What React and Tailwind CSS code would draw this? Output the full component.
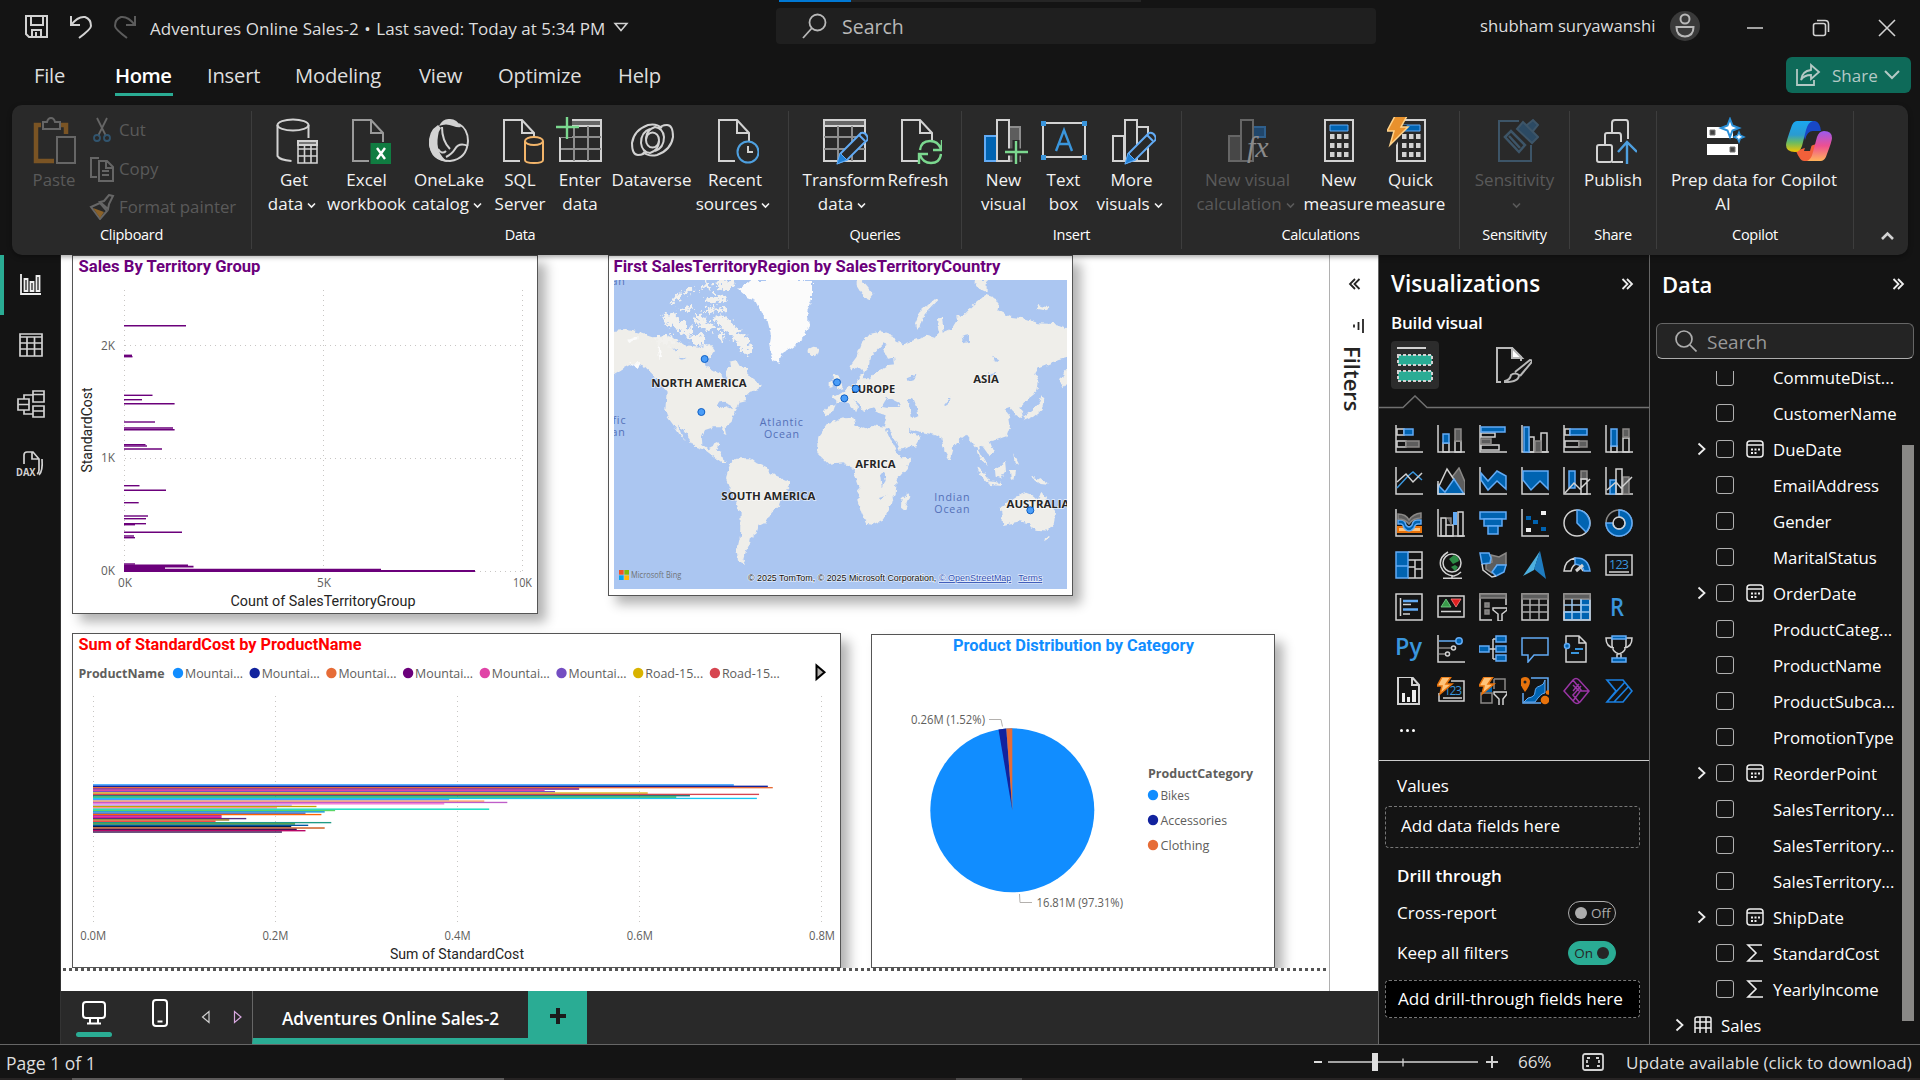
import React from "react";

const W = "#d2d2d2";
const G = "#8a8886";
const B = "#0063b1";
const LB = "#62abf5";

const S = ({ children, className = "w-12 h-12", vb = "0 0 48 48", c = W, w = 2 }) => (
  <svg className={className} viewBox={vb} fill="none" stroke={c} strokeWidth={w}>{children}</svg>
);

/* ---------- ribbon icons ---------- */
const Doc = ({ x = 7, c = W }) => (
  <g stroke={c}>
    <path d={`M${x + 17} 44H${x + 1}V3h18l12 13v9`} />
    <path d={`M${x + 19} 3v13h12`} />
  </g>
);
const Calc = ({ x = 9 }) => (
  <g>
    <path d={`M${x} 3h28v41h-28z`} />
    <path d={`M${x + 5} 8h18v6h-18z`} fill={B} stroke={LB} strokeWidth="1" />
    {[17, 26, 35].map((y) => [5, 12, 19].map((dx) => <path key={`${y}-${dx}`} d={`M${x + dx} ${y}h4.5v5h-4.5z`} fill={W} stroke="none" />))}
  </g>
);
const Pencil = ({ x = 17 }) => (
  <g>
    <path d={`M${x + 1} 46l3-10L${x + 24} 16q4-1 6 3t-2 6L${x + 10} 43z`} fill="#292929" stroke={LB} />
    <path d={`M${x} 47l3-11 7 7z`} fill="#1f7fd4" stroke={LB} strokeWidth="1" />
    <path d={`M${x + 22} 18l6 6`} stroke={LB} />
  </g>
);
const IGet = () => (
  <S>
    <ellipse cx="23" cy="8" rx="15.500" ry="5.500" /><path d="M7.500 8v31q2 4 14 5M38.500 8v13" />
    <path d="M28 24h19v22H28z M28 32h19M28 39h19M34.500 28v18M41 28v18" strokeWidth="1.600" /><path d="M28 24h19v4H28z" fill="#777" />
  </S>
);
const IExcel = () => (
  <S><Doc x={9} c="#9a9a9a" /><path d="M27.500 26h21v21h-21z" fill="#107c41" stroke="none" /><path d="M34 31l8 11M42 31l-8 11" stroke="#fff" strokeWidth="2.400" /></S>
);
const ILake = () => (
  <S>
    <path d="M34 7q9 5 9 17-1 18-18 20Q6 44 5 26" />
    <path d="M14 9Q18 1 25 2q7 0 11 8-3 1-8-1-7-3-14 0z" fill={W} stroke="none" />
    <path d="M13 8Q3 14 4 28q3 15 19 17Q10 36 13 19q0-4 3-8z" fill={W} stroke="none" />
    <path d="M17 10q0 14 8 22M21 40q6-3 9-8 4-7 13-3M13 32q4 6 8 2" />
  </S>
);
const ISql = () => (
  <S><Doc x={7} /><path d="M29 24v19q0 3 9 3t9-3V24" stroke="#f3b56a" fill="#292929" /><ellipse cx="38" cy="24" rx="9" ry="4" stroke="#f3b56a" fill="#292929" /></S>
);
const GridI = () => (
  <g><path d="M4 3h41v41H4z" /><path d="M4 3h41v6H4z" fill="#666" /><path d="M4 20h41M4 32h41M18 9v35M32 9v35" stroke="#8d8d8d" /></g>
);
const IEnter = () => (
  <S><GridI /><path d="M0 0h16v20H0z" fill="#292929" stroke="none" /><path d="M11-1v23M0 10h23" stroke="#7bd88f" strokeWidth="2.400" /><path d="M4 23v21" /></S>
);
const IDataverse = () => (
  <S w={2}>
    <path d="M34 11Q28 6 20 8 6 13 4 26q0 12 6 12 6 0 8-4" />
    <path d="M15 35q6 5 14 3 14-5 16-18 0-12-6-12-6 0-8 4" />
    <ellipse cx="24.500" cy="23" rx="6.500" ry="7.500" />
    <path d="M31 24q0 9-9 12-8-1-9-10 0-11 9-14" /><path d="M18 22q0-9 9-12 8 1 9 10 0 11-9 14" />
  </S>
);
const IRecent = () => (
  <S><Doc /><circle cx="37" cy="35" r="10.500" stroke="#4ea0e0" fill="#292929" /><path d="M37 29v6h5" /></S>
);
const ITransform = () => (<S><GridI /><Pencil x={17} /></S>);
const IRefresh = () => (
  <S><Doc /><path d="M26 33q1-9 10-9 8 0 11 8M48 23v10h-9M47 37q-1 9-10 9-8 0-11-8M25 47V37h9" stroke="#7bd88f" strokeWidth="2.400" /></S>
);
const INewVisual = () => (
  <S>
    <path d="M29 10h11v34H29z" fill="#5d5d5d" stroke="#8d8d8d" /><path d="M5 19h12v25H5z" fill={B} stroke={LB} /><path d="M17 3h12v41H17z" fill="#292929" />
    <path d="M36 23v24M25 35h23" stroke="#292929" strokeWidth="7" /><path d="M36 24v23M25 35h23" stroke="#7bd88f" strokeWidth="2.400" />
  </S>
);
const ITextBox = () => (
  <S>
    <path d="M3 6h42v34H3z" /><path d="M16 34l8-21 8 21M19 27h10" stroke="#3a96dd" strokeWidth="2.400" />
    {[[1, 4], [42, 4], [1, 38], [42, 38]].map(([x, y]) => <path key={x + "-" + y} d={`M${x} ${y}h5v5h-5z`} fill="#3a96dd" stroke="none" />)}
  </S>
);
const IMore = () => (<S><path d="M5 19h11v25H5zM17 3h12v41H17zM29 10h11v34H29z" /><Pencil x={17} /></S>);
const ICalcV = () => (
  <S c="#666">
    <path d="M5 19h12v25H5z" fill="#474747" /><path d="M29 10h12v10H29z" fill="#20466b" stroke="#2f5f8c" /><path d="M17 3h12v41H17z" fill="#292929" />
    <text x="23" y="40" fill="#8a8a8a" stroke="none" fontFamily="Liberation Serif, serif" fontStyle="italic" fontSize="30">fx</text>
  </S>
);
const Bolt = ({ t = "", s = "#ffd38a" }) => <path transform={t} d="M8 0h12l-6 11h7L3 29l4-14H0z" fill="#e8912d" stroke={s} strokeWidth="1.500" />;
const INewMeasure = () => <S><Calc x={10} /></S>;
const IQuick = () => (<S><Calc x={10} /><path d="M0 0h18l-4 8h6L8 30H0z" fill="#292929" stroke="none" /><Bolt t="translate(0,-1)" /></S>);
const ISens = () => (
  <S c="#3d5568"><path d="M28 4H8v40h32V28" /><path d="M14 20l6-6 14 14-6 7zM18 19l11 12" strokeWidth="2.500" /><path d="M26 12l6-7 15 15-6 6zM36 8l6-5 5 5-5 6" fill="#2c4a63" /></S>
);
const IPublish = () => (
  <S><rect x="8" y="28" width="15" height="17" rx="2" /><path d="M16 28V18q0-2 2-2h12q2 0 2 3v6M23 16V6q0-3 3-3h11q2 0 2 3v16M23 45h11" /><path d="M38 47V26M29 35l9-10 10 10" stroke="#4ea0e0" strokeWidth="2.400" /></S>
);
const IPrep = () => (
  <S><path d="M8 10h26v11H8zM8 27h31v11H8z" fill="#fff" stroke="none" /><path d="M11 13h5v5h-5zM31 30h5v5h-5z" fill="#444" stroke="#777" strokeWidth="1" />
    <path d="M31 2l2.500 6.500L40 11l-6.500 2.500L31 20l-2.500-6.500L22 11l6.500-2.500z" fill="#fff" stroke="#2a8fd8" strokeWidth="2" /><path d="M40 15l1.300 3.200L45 20l-3.700 1.500L40 25l-1.500-3.500L35 20l3.500-1.500z" fill="#fff" stroke="#2a8fd8" strokeWidth="1.500" /></S>
);
const ICopilot = () => (
  <S>
    <defs>
      <linearGradient id="cpa" x1="0" y1="0" x2="0" y2="1"><stop offset="0" stopColor="#1aa7f0" /><stop offset=".45" stopColor="#2b9bd0" /><stop offset=".7" stopColor="#6cbb60" /><stop offset="1" stopColor="#f4c400" /></linearGradient>
      <linearGradient id="cpb" x1="0" y1="0" x2="0" y2="1"><stop offset="0" stopColor="#9b59f0" /><stop offset=".5" stopColor="#ee5090" /><stop offset="1" stopColor="#ffb35a" /></linearGradient>
    </defs>
    <path d="M15 4h15q5 1 6 10h-8q-6 0-8 9z" fill="#1848c8" stroke="none" /><path d="M11 34q4 10 8 10h11l4-18z" fill="#f2603a" stroke="none" />
    <path d="M12 4h16q-5 1-7 9l-4 16q-2 6-7 6Q1 35 1 28q0-3 5-17 2-7 6-7z" fill="url(#cpa)" stroke="none" />
    <path d="M36 44H22q4-1 6-9l4-15q2-6 7-6 8 0 8 7 0 3-5 16-2 7-6 7z" fill="url(#cpb)" stroke="none" />
    <path d="M23 20h6l-4 14h-6z" fill="#292929" stroke="none" />
  </S>
);

const Caret = () => (
  <svg className="ml-1 inline-block h-[7px] w-[9px]" viewBox="0 0 9 7" fill="none" stroke="currentColor" strokeWidth="1.600"><path d="M1 1.500l3.500 3.500L8 1.500" /></svg>
);

function Item({ icon: Icon, w, l1, l2, caret, dim }) {
  return (
    <div className={`flex shrink-0 flex-col items-center ${w} ${dim ? "text-[#5a5a5a]" : "text-[#f3f3f3]"}`}>
      <Icon />
      <div className="mt-[3px] whitespace-nowrap text-center text-[17px] leading-6">
        <div>{l1}</div>
        <div className={caret && l2 ? "pr-[4px]" : ""}>{l2}{caret && <Caret />}</div>
      </div>
    </div>
  );
}
function Group({ name, w, children, inner = "justify-center" }) {
  return (
    <div className={`flex h-[138px] shrink-0 flex-col border-r border-[#3d3d3d] ${w}`}>
      <div className={`flex h-[113px] pt-[6px] ${inner}`}>{children}</div>
      <div className="text-center text-[14.500px] leading-[22px] tracking-[-0.3px] text-white">{name}</div>
    </div>
  );
}

/* ---------- title bar + menu ---------- */
function TitleBar() {
  return (
    <div className="relative flex h-[52px] items-start text-[#dedede]">
      <div className="absolute left-[779px] top-0 flex h-[2px]"><div className="w-[72px] bg-[#0078d4]" /><div className="w-[290px] bg-[#252525]" /></div>
      <S className="ml-[24px] mt-[14px] h-[25px] w-[25px]" vb="0 0 25 25"><path d="M2 2h21v21H5l-3-3z" /><path d="M7 2v9h12V2M8 23v-7h9v7M12 18v5" /></S>
      <S className="ml-[20px] mt-[14px] h-[25px] w-[25px]" vb="0 0 25 25"><path d="M2 2v9h9M2 11Q9 2 16 3q6 2 6 9 0 3-12 12" /></S>
      <S className="ml-[18px] mt-[14px] h-[25px] w-[25px]" vb="0 0 25 25" c="#5c5c5c"><path d="M23 2v9h-9M23 11Q16 2 9 3 3 5 3 12q0 3 12 12" /></S>
      <div className="ml-[13px] mt-[17px] w-[455px] whitespace-nowrap text-[17px] leading-6 tracking-[0.050px]">Adventures Online Sales-2 <span className="mx-px">•</span> Last saved: Today at 5:34 PM</div>
      <S className="ml-[8px] mt-[22px] h-[10px] w-[16px]" vb="0 0 16 10" w={1.5}><path d="M2 1.500h12L8 8.500z" /></S>
      <div className="ml-[147px] mt-[8px] flex h-[36px] w-[600px] items-center rounded bg-[#1f1f1f] pl-[26px] text-[19.500px] text-[#b8b8b8]">
        <S className="h-[26px] w-[26px]" vb="0 0 26 26" w={1.8} c="#b8b8b8"><circle cx="15.500" cy="9.500" r="8" /><path d="M10 15L1 25" /></S>
        <span className="ml-[14px] pt-[2px]">Search</span>
      </div>
      <div className="ml-[104px] mt-[14px] w-[176px] whitespace-nowrap text-[16.700px] leading-6">shubham suryawanshi</div>
      <S className="ml-[14px] mt-[11px] h-[30px] w-[30px]" vb="0 0 30 30"><circle cx="15" cy="15" r="15" fill="#3a3a3a" stroke="none" /><circle cx="15" cy="8" r="4.500" stroke="#b8b8b8" /><path d="M6.500 16h17q0 9-8.500 9.500Q6.500 25 6.500 16z" stroke="#b8b8b8" /></S>
      <S className="ml-[46px] mt-[19px] h-[18px] w-[18px]" vb="0 0 18 18" w={1.5}><path d="M1 9h16" /></S>
      <S className="ml-[48px] mt-[19px] h-[18px] w-[18px]" vb="0 0 18 18" w={1.6}><rect x="1.500" y="4.500" width="12" height="12" rx="2" /><path d="M5 1.500h8q3.500 0 3.500 3.500v8" /></S>
      <S className="ml-[48px] mt-[19px] h-[18px] w-[18px]" vb="0 0 18 18" w={1.6}><path d="M1 1l16 16M17 1L1 17" /></S>
    </div>
  );
}
const tabs = [["File", "ml-[34px] w-[81px]"], ["Home", "w-[92px]"], ["Insert", "w-[88px]"], ["Modeling", "w-[124px]"], ["View", "w-[79px]"], ["Optimize", "w-[120px]"], ["Help", "w-[60px]"]];
function Menu() {
  return (
    <div className="flex h-[53px] items-start text-[20.200px] text-[#dedede]">
      {tabs.map(([t, c]) => (
        <div key={t} className={`${c} pt-[8px] tracking-[-0.2px]`}>
          {t === "Home" ? <div className="w-[58px] whitespace-nowrap border-b-[3px] border-[#2aac94] pb-[3px] font-semibold leading-[30px] tracking-[-0.500px] text-white">{t}</div> : <div className="leading-[30px]">{t}</div>}
        </div>
      ))}
      <div className="ml-auto mr-[9px] mt-[5px] flex h-[36px] w-[125px] items-center rounded-md bg-[#0e6a59] pl-[9px] text-[17px] text-[#b4c9c5]">
        <S className="h-[24px] w-[26px]" vb="0 0 26 24" c="#b4c9c5" w={1.8}><path d="M2 6v16h17v-5M6 17q1-9 10-10V2l8 7-8 7v-4Q9 12 6 17z" /></S>
        <span className="ml-[11px] pt-px">Share</span>
        <S className="ml-[6px] h-[10px] w-[16px]" vb="0 0 16 10" c="#b4c9c5"><path d="M1 1l7 7 7-7" /></S>
      </div>
    </div>
  );
}
function Ribbon() {
  return (
    <div className="relative z-10 mx-3 flex h-[150px] rounded-[10px] bg-[#292929] pt-[6px] shadow-[0_2px_5px_rgba(0,0,0,0.35)]">
      <Group name="Clipboard" w="w-[240px]">
        <div className="flex w-full pl-[18px] text-[16.800px] text-[#5a5a5a]">
          <div className="flex w-[48px] flex-col items-center">
            <svg className="h-12 w-12" viewBox="-2 0 48 48" fill="none" stroke="#666" strokeWidth="2"><path d="M9 8H4v36h18M28 8h6v9" stroke="#7a5424" strokeWidth="4.500" /><path d="M11 5h4q1-4 4-4t4 4h5v7H11z" /><path d="M25 20h18v26H25z" fill="#292929" /></svg>
            <div className="mt-[3px] leading-6">Paste</div>
          </div>
          <div className="ml-[11px] flex flex-col">
            <div className="flex h-[26px] items-center"><S className="h-[26px] w-[26px]" vb="0 0 26 26" c="#666" w={1.8}><path d="M8 1l9 18M18 1L9 19" /><circle cx="8" cy="21" r="3" stroke="#31556f" /><circle cx="18" cy="21" r="3" stroke="#31556f" /></S><span className="ml-[4px]">Cut</span></div>
            <div className="mt-[13px] flex h-[26px] items-center"><S className="h-[26px] w-[26px]" vb="0 0 26 26" c="#666"><path d="M8 21H2V2h8M10 5h8l6 6v14H10zM13 15h7M13 19h7M17 5v7h7" /></S><span className="ml-[4px]">Copy</span></div>
            <div className="mt-[12px] flex h-[26px] items-center whitespace-nowrap"><S className="h-[26px] w-[26px]" vb="0 0 26 26" c="#666"><path d="M2 13l9-4 7 8-7 8z" /><path d="M4 14l11 4-4 6z" fill="#8a6128" stroke="none" /><path d="M11 8l4-1 5-6 4 1-4 8-1 5z" /></S><span className="ml-[4px]">Format painter</span></div>
          </div>
        </div>
      </Group>
      <Group name="Data" w="w-[537px]">
        <Item icon={IGet} w="w-[72px]" l1="Get" l2="data" caret />
        <Item icon={IExcel} w="w-[73px]" l1="Excel" l2="workbook" />
        <Item icon={ILake} w="w-[92px]" l1="OneLake" l2="catalog" caret />
        <Item icon={ISql} w="w-[50px]" l1="SQL" l2="Server" />
        <Item icon={IEnter} w="w-[70px]" l1="Enter" l2="data" />
        <Item icon={IDataverse} w="w-[73px]" l1="Dataverse" />
        <Item icon={IRecent} w="w-[94px]" l1="Recent" l2="sources" caret />
      </Group>
      <Group name="Queries" w="w-[173px]">
        <Item icon={ITransform} w="w-[86px]" l1="Transform" l2="data" caret />
        <Item icon={IRefresh} w="w-[62px]" l1="Refresh" />
      </Group>
      <Group name="Insert" w="w-[220px]">
        <Item icon={INewVisual} w="w-[58px]" l1="New" l2="visual" />
        <Item icon={ITextBox} w="w-[62px]" l1="Text" l2="box" />
        <Item icon={IMore} w="w-[74px]" l1="More" l2="visuals" caret />
      </Group>
      <Group name="Calculations" w="w-[278px]" inner="justify-center pr-[2px]">
        <Item icon={ICalcV} w="w-[110px]" l1="New visual" l2="calculation" caret dim />
        <Item icon={INewMeasure} w="w-[72px]" l1="New" l2="measure" />
        <Item icon={IQuick} w="w-[72px]" l1="Quick" l2="measure" />
      </Group>
      <Group name="Sensitivity" w="w-[110px]"><Item icon={ISens} w="w-[80px]" l1="Sensitivity" caret dim /></Group>
      <Group name="Share" w="w-[87px]"><Item icon={IPublish} w="w-[60px]" l1="Publish" /></Group>
      <Group name="Copilot" w="w-[197px]" inner="justify-center pr-[14px]">
        <Item icon={IPrep} w="w-[122px]" l1="Prep data for" l2="AI" />
        <Item icon={ICopilot} w="w-[50px]" l1="Copilot" />
      </Group>
      <S className="mb-[14px] ml-auto mr-[13px] h-[10px] w-[15px] self-end" vb="0 0 15 10" w={2.6}><path d="M2 8l5.500-5.500L13 8" /></S>
    </div>
  );
}

/* ---------- report visuals ---------- */
const DIN = "Roboto, sans-serif";
const SEG = "Open Sans, sans-serif";
function T({ x, y, s = 12.5, a = "start", f = SEG, c = "#605e5c", l, b, children, ...p }) {
  return <text x={x} y={y} fontSize={s} textAnchor={a} fontFamily={f} fill={c} fontWeight={b ? 700 : 400} textLength={l} lengthAdjust="spacingAndGlyphs" {...p}>{children}</text>;
}
const terr = [[325.7, 186], [355.3, 132], [356.7, 132.5], [395.3, 152.5], [399.7, 142], [403.7, 174.6], [422, 155], [428, 173], [429.7, 174.6], [444.7, 145.5], [446, 147], [449, 162], [485.7, 139.5], [490.3, 166], [502.7, 138.7], [516, 148], [518.7, 146], [523.7, 146], [524.7, 135], [532.3, 182], [536, 134], [537.7, 135], [564, 135], [565.5, 188], [566.7, 193.5], [568, 165], [569.7, 381], [571, 475]];
const shadow = "border border-[#555] bg-white shadow-[8px_8px_11px_rgba(0,0,0,0.3)]";
function TerritoryChart() {
  return (
    <div className={`h-[359px] w-[466px] ${shadow}`}>
      <svg className="block h-[357px] w-[464px]" viewBox="73 256 464 357">
        <T x="78.500" y="272.300" s="16.500" f={DIN} b c="#6b007b" l="182">Sales By Territory Group</T>
        {[124.500, 323.500, 522.500].map((x) => <path key={x} d={`M${x} 290V572`} stroke="#c8c6c4" strokeDasharray="1 4" />)}
        {[345.500, 458.500, 571.500].map((y) => <path key={y} d={`M125 ${y}H522`} stroke="#c8c6c4" strokeDasharray="1 4" />)}
        {terr.map(([y, x], i) => <path key={i} d={`M124 ${y}H${x}`} stroke="#6b007b" strokeWidth={y > 564 ? 1.8 : 1.4} />)}
        {[["2K", 350], ["1K", 462], ["0K", 575]].map(([t, y]) => <T key={t} x="115" y={y} a="end" s="12" l="14">{t}</T>)}
        {[["0K", 125, 14], ["5K", 324, 14], ["10K", 522.500, 19]].map(([t, x, l]) => <T key={t} x={x} y="587" a="middle" s="12" l={l}>{t}</T>)}
        <T x="323" y="605.500" a="middle" f={DIN} s="14" c="#252423" l="185">Count of SalesTerritoryGroup</T>
        <T x="0" y="0" transform="translate(92 430) rotate(-90)" a="middle" f={DIN} s="14" c="#252423" l="85">StandardCost</T>
      </svg>
    </div>
  );
}
const dots = [[344, 327], [334, 486], [741, 397], [797, 416], [763, 445], [1321, 781]];
const arctic = "M225 190l25 0 20 18 20 15 18 20-10 14-25-8-20-18-25-8-12-14zM235 158l22-22 18-4-4 18zM280 130l22-20 10 6-8 16zM262 176l40-8 14 8-30 8zM330 120l18-22 16 0-8 20zM370 96l50-6 20 0-12 22-30 12zM340 150l30-16 30 4 8 16-38 8zM330 178l80-4-4 10-70 2zM310 196l30 2 14 22 24 6-10 20-30-10-18-20zM370 200l30-4 26 18 10 24 30 14 20 38-10 30-22-20-22-34-24-24-20-10zM385 245l14 4 2 30-12-6zM200 262l40-6 20 20-30 10-30-8zM290 262l40-10 24 14-20 18-30-2zM330 288l25-6 14 20-20 8z";
function MapVisual() {
  return (
    <div className={`h-[341px] w-[465px] ${shadow}`}>
      <svg className="block h-[24px] w-[463px]" viewBox="609 256 463 24"><T x="613.500" y="272.300" s="16.500" f={DIN} b c="#6b007b" l="387">First SalesTerritoryRegion by SalesTerritoryCountry</T></svg>
      <svg className="ml-[5px] block h-[309px] w-[453px]" viewBox="72 90 1359 927">
        <filter id="coast" x="-5%" y="-5%" width="110%" height="110%"><feTurbulence type="fractalNoise" baseFrequency="0.06" numOctaves="2" seed="4" /><feDisplacementMap in="SourceGraphic" scale="17" xChannelSelector="R" yChannelSelector="G" /></filter>
        <filter id="isles" x="-10%" y="-10%" width="120%" height="120%"><feTurbulence type="fractalNoise" baseFrequency="0.09" numOctaves="2" seed="9" /><feDisplacementMap in="SourceGraphic" scale="42" xChannelSelector="R" yChannelSelector="G" /></filter>
        <path d="M72 90h1359v927H72z" fill="#abc6f1" />
        <g fill="#efeeea" filter="url(#coast)">
          <path d="M60 243L110 240 150 248 190 262 240 258 280 285 330 290 365 285 375 300 360 320 345 330 350 350 375 365 395 372 400 392 412 385 410 365 420 350 418 335 440 330 452 350 470 355 485 385 512 405 505 420 480 425 465 440 470 450 450 455 440 478 430 495 425 515 407 530 412 555 400 550 395 532 370 532 345 540 335 560 337 585 355 598 370 590 378 576 388 580 380 605 395 612 400 630 415 635 395 637 365 615 345 600 315 590 300 570 275 535 264 527 275 555 285 574 270 555 250 525 232 500 226 480 230 425 215 405 190 375 165 350 130 340 100 355 60 380z" />
          <path d="M655 300l15-7 22 4-4 13-18 10-12-5z" />
          <path d="M425 630l25-5 30 0 20 15 25 10 15 20 30 12 30 13 0 17-22 28-8 25-25 20-20 35-20 10-5 20-20 15-5 25-10 15-5 20 8 20-23-10-5-30 10-45 2-70-12-30-20-40-12-30 4-25z" />
          <path d="M715 520l45-15 30-2 7 22 33 13 15-13 40 5 15 30 25 40 10 25 32-2-17 32-30 35-3 45-12 15-8 30-17 30-30 14-20-2-15-32-13-40 6-30-14-40-4-25-30-15-45 5-25-25-10-20 5-40z" />
          <path d="M935 745l20-15 6 10-16 40-12-10z" />
          <path d="M712 470l28-5-2-15-13-10 20-5 15-10 20-15 20-10 10-15-2-15 17-2-5 17 20 0 10-13 20-12 25-15 20-2-3-20-18 3-15-30 30-25 32 12 35-13 35-13 25 8 10-20-5-35 15-5 5 40 25-10 15-25-5-10 25-5 30-30 35-30 40 15-3 30 38 20 40 5 45 15 55 3 45 17v80l-40 10-35 15-25 10-10 15 10 25-5 30-30 25-20 23 12 17-12 15-12-10-18-22-17 6 12 15 5 30-12 35-30 10-20 5 12 30-12 15-25-35-10 10 15 30 15 25-20-20-15-35-15-20-15-20-20 15-20 25-10 35-15-25-10-40-20-10-50-10-28-8 10 15 26 8-15 27-50 14-15-24-30-48 8-32-30-8-8-17-20 7-13 5-13-20-20-15 18 22-5 16-15-12-15-20-20 0-15 17-5 15-20 10-13-5z" />
          <path d="M778 350l22-30 15-40 25-28 35-8 30 10 15 20-15 15-25-10-15 15-25 30-4 26-11 18-15-13-10-3-15 10z" />
          <path d="M733 372l15 10 12 33-22 5 0-20-8-10zM716 397l10-6 2 20-12 4z" />
          <path d="M1160 648l12 8 25 32-6 10-20-22zM1195 694l38 4 0 7-38-4zM1215 660l20-15 10-13 3 30-15 22-16-4zM1260 660l15 0-5 30-8-3zM1322 680l25 5 30 20-25-3zM1270 610l8 15 10 20-15-10z" />
          <path d="M1232 772l28-17 30-20 18-7 20 8 17 14 10-30 15 35 25 35-3 30-22 25-30-3-20-20-30-8-50 11z" />
          <path d="M1362 862l14 0-5 12z" />
          <path d="M980 240l-5-20 15-35 45-38 7 6-38 40-12 38zM1410 400l12-35 12-15v45l-16 20zM1300 500l25-18 22-22 8-30 8 15-8 35-25 20-28 12zM800 90l25 10 25 30-15 20-20-20-15-25zM1150 90l40 0 0 40-20-10zM1340 165l40 8-15 8-25-5z" />
        </g>
        <path d={arctic} fill="#f2f1ee" filter="url(#isles)" />
        <g filter="url(#coast)" fill="#fbfbfb"><path d="M445 118l40-28h181v60l-14 30 5 48-20 40-35 27-25 15-10 28-15-3-10-25-5-30 5-30-10-40-20-20-10-35-27-10z" /><path d="M110 270l35-12 0 10-30 8zM120 340l30 0-5 15zM208 290l8 30-8 10-5-35z" /></g>
        <g filter="url(#coast)" fill="#abc6f1"><path d="M872 470l10-17 20-8 30 15-8 14-30 0zM952 450l18-8 10 25 5 32-18 5zM378 460l25-5 18 8 8 15-22-10-15 10-10-8zM1060 465l18-22 4 3-14 22zM950 385l30-12-10 14-18 6zM1195 370l28-5-25 18zM1115 260l25-5 0 20-20 5zM870 675l14-8 3 25-12 20zM865 740l25-6-25 14zM245 290l20 10-10 5zM270 320l20 4-18 5zM1210 320l15 8-10 8zM888 536l8-2 32 62 6 22-8-4-18-32z" /></g>
        <g fontFamily="Open Sans, sans-serif" fontWeight="700" fontSize="34" fill="#262626" textAnchor="middle" stroke="#fff" strokeWidth="4" paintOrder="stroke" strokeOpacity=".7">
          <text x="327" y="411" textLength="286" lengthAdjust="spacingAndGlyphs">NORTH AMERICA</text>
          <text x="535" y="750" textLength="282" lengthAdjust="spacingAndGlyphs">SOUTH AMERICA</text>
          <text x="850" y="429" textLength="131" lengthAdjust="spacingAndGlyphs">EUROPE</text>
          <text x="1188" y="399" textLength="77" lengthAdjust="spacingAndGlyphs">ASIA</text>
          <text x="856" y="654" textLength="121" lengthAdjust="spacingAndGlyphs">AFRICA</text>
          <text x="1344" y="774" textLength="189" lengthAdjust="spacingAndGlyphs">AUSTRALIA</text>
        </g>
        <g fontFamily="Open Sans, sans-serif" fontSize="32" fill="#5470b8" textAnchor="middle" letterSpacing="2.500">
          <text x="575" y="528">Atlantic</text><text x="576" y="563">Ocean</text><text x="1087" y="753">Indian</text><text x="1087" y="788">Ocean</text>
          <text x="109" y="521" textAnchor="end">fic</text><text x="107" y="557" textAnchor="end">an</text><text x="107" y="104" textAnchor="end">an</text>
        </g>
        {dots.map(([x, y]) => <circle key={x} cx={x} cy={y} r="10.500" fill="#4a9df8" stroke="#0f5fc4" strokeWidth="3" />)}
        <path d="M87 960h14v14H87z" fill="#f35325" /><path d="M103 960h14v14h-14z" fill="#81bc06" /><path d="M87 976h14v14H87z" fill="#05a6f0" /><path d="M103 976h14v14h-14z" fill="#ffba08" />
        <text x="123" y="984" fontSize="27" fill="#6f7377" fontFamily="Open Sans, sans-serif" textLength="151" lengthAdjust="spacingAndGlyphs">Microsoft Bing</text>
        <g fontFamily="Liberation Sans, sans-serif" fontSize="27" stroke="#fff" strokeWidth="4" paintOrder="stroke" strokeOpacity=".7">
          <text x="474" y="993" fill="#111" textLength="565" lengthAdjust="spacingAndGlyphs">© 2025 TomTom, © 2025 Microsoft Corporation,</text>
          <text x="1047" y="993" fill="#2f4fb5" textDecoration="underline" textLength="217" lengthAdjust="spacingAndGlyphs">© OpenStreetMap</text>
          <text x="1285" y="993" fill="#2f4fb5" textDecoration="underline" textLength="72" lengthAdjust="spacingAndGlyphs">Terms</text>
        </g>
      </svg>
    </div>
  );
}
const bars = [["#118dff", 1338], ["#12239e", 1400], ["#e66c37", 1409], ["#6b007b", 1056], ["#e044a7", 993], ["#744ec2", 1012], ["#d9b300", 1181], ["#d64550", 1384], ["#197278", 1258], ["#1aab40", 1233], ["#15c6f4", 1380], ["#4092ff", 819], ["#ffa058", 883], ["#be5dc9", 925], ["#f472d0", 810], ["#b5a1ff", 532], ["#c4a200", 577], ["#ff8080", 505], ["#00dbbc", 892], ["#5bd667", 611], ["#0091d5", 592], ["#4668c5", 557], ["#ff6300", 586], ["#99008a", 404], ["#ec008c", 404], ["#533285", 449], ["#99700a", 418], ["#ff4141", 393], ["#1f9a85", 604], ["#25891c", 538], ["#0057a2", 562], ["#002050", 531], ["#c94f0f", 592], ["#450f54", 541], ["#b60064", 557], ["#34124f", 514]];
const legend = [["#118dff", "Mountai..."], ["#12239e", "Mountai..."], ["#e66c37", "Mountai..."], ["#6b007b", "Mountai..."], ["#e044a7", "Mountai..."], ["#744ec2", "Mountai..."], ["#d9b300", "Road-15..."], ["#d64550", "Road-15..."]];
function ProductChart() {
  return (
    <div className={`h-[335px] w-[769px] ${shadow}`}>
      <svg className="block h-[333px] w-[767px]" viewBox="73 634 767 333">
        <T x="78.500" y="650" s="16.500" f={DIN} b c="#ff0000" l="283">Sum of StandardCost by ProductName</T>
        <T x="78.500" y="678" b l="86" s="13">ProductName</T>
        {legend.map(([c, t], i) => <g key={i}><circle cx={178 + i * 76.7} cy="673" r="5.200" fill={c} /><T x={185 + i * 76.7} y="678" s="13" l="58">{t}</T></g>)}
        <path d="M816.500 665.500v13.500l8-6.700z" fill="#b3b0ad" stroke="#000" strokeWidth="2" />
        {[0, 1, 2, 3, 4].map((i) => (
          <g key={i}><path d={`M${93.500 + i * 182} 696V924`} stroke="#c8c6c4" strokeDasharray="1 4" /><T x={93.200 + i * 182.200} y="940" a="middle" s="12" l="26">{`0.${i * 2}M`}</T></g>
        ))}
        {bars.map(([c, x], i) => <rect key={i} x="93" y={784.300 + i * 1.345} width={x / 1.8233 - 93} height="1.345" fill={c} />)}
        <T x="457" y="959" a="middle" f={DIN} s="14" c="#252423" l="134">Sum of StandardCost</T>
      </svg>
    </div>
  );
}
function PieChart() {
  const p = (f) => `${(1012.3 + 82 * Math.sin(2 * Math.PI * f)).toFixed(2)} ${(810.3 - 82 * Math.cos(2 * Math.PI * f)).toFixed(2)}`;
  return (
    <div className={`h-[334px] w-[404px] ${shadow}`}>
      <svg className="block h-[332px] w-[402px]" viewBox="872 635 402 332">
        <T x="1073.500" y="651" s="16.500" a="middle" f={DIN} b c="#118dff" l="241">Product Distribution by Category</T>
        <circle cx="1012.300" cy="810.300" r="82" fill="#118dff" />
        <path d={`M1012.300 810.300L${p(-0.0269)}A82 82 0 0 1 ${p(-0.0117)}z`} fill="#12239e" /><path d={`M1012.300 810.300L${p(-0.0117)}A82 82 0 0 1 ${p(0)}z`} fill="#e66c37" />
        <path d="M989 719.500h12l1.500 7M1019.500 894l.5 8.500h12" fill="none" stroke="#b3b0ad" />
        <T x="911" y="724" l="74" s="12.500">0.26M (1.52%)</T><T x="1036.500" y="907" l="86.500" s="12.500">16.81M (97.31%)</T>
        <T x="1148" y="778" b l="105" s="13.200">ProductCategory</T>
        {[["Bikes", "#118dff", 795, 29], ["Accessories", "#12239e", 820, 66.500], ["Clothing", "#e66c37", 845, 49]].map(([t, c, y, l]) => <g key={t}><circle cx="1153" cy={y} r="5.200" fill={c} /><T x="1160.500" y={y + 5} s="13.200" l={l}>{t}</T></g>)}
      </svg>
    </div>
  );
}

/* ---------- side panes ---------- */
const Dbl = ({ c = "#eee", flip }) => <S className={`h-[12px] w-[13px] ${flip ? "rotate-180" : ""}`} vb="0 0 13 12" c={c} w={1.8}><path d="M1.500 1l5 5-5 5M6 1l5 5-5 5" /></S>;
function LeftNav() {
  return (
    <div className="flex w-[61px] shrink-0 flex-col items-center border-r border-[#333]">
      <div className="flex h-[60px] w-full items-center justify-center border-l-4 border-[#2aac94] pr-[3px]"><S className="h-6 w-6" vb="0 0 24 24" w={1.8} c="#eee"><path d="M2 1v20h20M5.500 6h3v12h-3zM11.500 9h3v9h-3zM17.500 3h3v15h-3z" /></S></div>
      <div className="flex h-[59px] items-center"><S className="ml-[2px] h-6 w-6" vb="0 0 24 24" w={1.7}><path d="M1 1h22v22H1zM1 4h22M1 10h22M1 16h22M8 4v19M15.500 4v19" /></S></div>
      <div className="flex h-[60px] items-center"><S className="ml-[2px] h-7 w-7" vb="0 0 28 28" w={1.7}><path d="M1 9h11v11H1zM16 1h11v11H16zM16 16h11v11H16zM1 14.500h11M16 4.500h11M16 21h11M7 9V5h9M7 20v4h9" /></S></div>
      <div className="flex h-[60px] items-center"><S className="h-7 w-7" vb="0 0 28 28" w={1.7}><path d="M8 14V5q0-3 3-3h6l6 7v11q0 3-2 4M16 2v7h7M26 9q1 12-3 16" /><text x="0" y="26" fontSize="10.500" fontWeight="700" fill={W} stroke="none" fontFamily="Open Sans, sans-serif" textLength="19.500" lengthAdjust="spacingAndGlyphs">DAX</text></S></div>
    </div>
  );
}
const V = ({ children }) => <S className="h-7 w-7" vb="0 0 28 28" w={1.500}>{children}</S>;
const ax = <path d="M1 0v27h27" />;
const b = { fill: B, stroke: LB }, g = { fill: "#5d5d5d", stroke: G };
const vis = [
  <>{ax}<path d="M2 4h7v6H2zM2 16h9v6H2z" /><path d="M9 4h9v6H9z" {...b} /><path d="M11 16h13v6H11z" {...g} /></>,
  <>{ax}<path d="M6 18h6v9H6zM18 16h6v11h-6z" /><path d="M6 9h6v9H6z" {...b} /><path d="M18 4h6v12h-6z" {...g} /></>,
  <>{ax}<path d="M2 8h14v4H2zM2 20h18v5H2z" /><path d="M2 2h24v5H2z" {...b} /><path d="M2 14h10v5H2z" {...g} /></>,
  <>{ax}<path d="M8 12h5v15H8zM20 8h6v19h-6z" /><path d="M3 2h5v25H3z" {...b} /><path d="M14 16h6v11h-6z" {...g} /></>,
  <>{ax}<path d="M2 4h5v6H2zM2 16h14v6H2z" /><path d="M7 4h17v6H7z" {...b} /><path d="M16 16h8v6h-8z" {...g} /></>,
  <>{ax}<path d="M6 21h6v6H6zM18 13h6v14h-6z" /><path d="M6 4h6v17H6z" {...b} /><path d="M18 4h6v8h-6z" {...g} /></>,
  <>{ax}<path d="M2 21L13 9l5-4 9 8" stroke="#3a96dd" /><path d="M2 15l9-8 7 8 9-9" /></>,
  <><path d="M12 14l10-13 6 14v12h-3z" {...g} /><path d="M2 19L10 2l8 12-5 7" fill="#141414" /><path d="M1 18l7 7 9-13 10 15H1z" {...b} /><path d="M1 14v13h27" /></>,
  <>{ax}<path d="M2 6l7 8 9-10 9 5v13l-9-8-9 9-7-10z" {...b} /></>,
  <>{ax}<path d="M2 4h25v18l-8-8-9 9-8-10z" {...b} /></>,
  <>{ax}<path d="M6 4h6v17H6z" {...b} /><path d="M18 4h6v8h-6z" {...g} /><path d="M18 12h6v15h-6zM2 26l9-10 6 6 10-10" /></>,
  <>{ax}<path d="M18 10h6v17h-6z" {...g} /><path d="M5 13h6v14H5z" {...b} /><path d="M11 2h6v25h-6zM2 23l9-8 5 6 11-11" /></>,
  <>{ax}<path d="M3 18h23v5H3z" fill="#ffc27a" stroke="#e8730c" strokeWidth="2" /><path d="M3 11h3q4 0 5 5 3 4 6 0 1-5 5-5h4v4h-3q-3 0-4 4-5 6-10 0-1-4-3-4H3z" {...b} /><path d="M3 5q8 0 11 6 4-6 12-7v5q-8 0-12 6-4-5-11-5z" {...g} /></>,
  <>{ax}<path d="M4 9h5v18H4zM9 16h7v11H9zM21 3h5v24h-5z" /><path d="M10 9h4v7" {...g} /><path d="M16 3h4v13h-4z" fill={LB} stroke="none" /></>,
  <><path d="M1 3h26v7H1z" {...b} /><path d="M5 10h18v7H5z" {...b} /><path d="M9 17h10v8H9z" {...b} /></>,
  <>{ax}<path d="M5 7h5v4H5zM12 11h5v4h-5zM20 18h5v4h-5z" fill={B} stroke="none" /><path d="M20 2h5v4h-5zM5 19h5v4H5z" fill="#eee" stroke="none" /></>,
  <><circle cx="14" cy="14" r="13" /><path d="M14 1a13 13 0 0 1 9 22l-9-9z" {...b} /></>,
  <><circle cx="14" cy="14" r="13" stroke={G} /><path d="M14 1a13 13 0 1 1-13 13h7a6 6 0 1 0 6-6z" {...b} /><circle cx="14" cy="14" r="6" stroke={W} /></>,
  <><path d="M13 1h14v26H13M13 9h14M13 16h7M20 9v18M20 18h7" /><path d="M1 1h12v14H1zM1 15h12v12H1z" {...b} /></>,
  <><circle cx="15" cy="12" r="9" /><path d="M12 8l5-4 4 2 1 4-6 3zM14 16l4-2 3 2-3 4z" fill="#2d8c46" stroke="none" /><path d="M11 1Q1 7 4 16q3 8 13 9 4-1 7-4M15 24v3M6 27.300h19" /></>,
  <><path d="M12 4l8 2 7-4v12h-9l-5 8-6-4 0-5 6-2z" {...g} /><path d="M1 2h9l2 5-1 5-8 1zM18 14h9l-2 7-8 4-4-4z" {...b} /><path d="M3 13l1 6 5 4 4 3 4-1" /></>,
  <><path d="M19 0L2 25l11-6z" fill="#4eb1e0" stroke="none" /><path d="M19 0l6 28-12-10z" fill="#1f7cc0" stroke="none" /></>,
  <><path d="M1 20Q2 9 12 7l1 6q-4 2-5 7zM20 20l-3-5 4-3" /><path d="M12 7q13-1 15 13h-6q-1-6-9-7z" {...b} /><path d="M13 20l7-6" strokeWidth="3" /></>,
  <><path d="M1 4h26v20H1zM4 21h20" /><text x="4" y="18" fontSize="12.500" fill="#3a96dd" stroke="none" fontFamily="Open Sans, sans-serif" textLength="20">123</text></>,
  <><path d="M1 1h26v26H1zM5.500 5v18M8 11.500h8M8 21h7" /><path d="M8 8h15M8 16.500h15" stroke={LB} strokeWidth="2.500" /></>,
  <><path d="M1 3h26v21H1zM4 18.500h20" /><path d="M4 14l5-8 5 8z" fill="#3a9a4a" stroke="#7bd88f" strokeWidth=".8" /><path d="M14 6h10l-5 8z" fill="#e02020" stroke="#f88" strokeWidth=".8" /></>,
  <><path d="M27 12V1H1v26h12" /><path d="M1 1h26v4H1z" {...g} /><path d="M6 10h4v4H6zM6 17h4v4H6z" fill="#777" stroke={G} /><path d="M14 15h14v2l-5 4v7h-4v-7l-5-4z" /></>,
  <><path d="M1 1h26v26H1z" /><path d="M1 1h26v5H1z" {...g} /><path d="M1 12h26M1 19h26M9 6v21M18 6v21" stroke="#aaa" /></>,
  <><path d="M18 6h9v21H1v-8h17z" {...b} /><path d="M1 1h26v26H1z" /><path d="M1 1h26v5H1z" {...g} /><path d="M1 12h26M1 19h26M9 6v21M18 6v21" stroke="#9cc8ee" /></>,
  <><text x="5" y="23" fontSize="25" fontWeight="600" fill="#3a96dd" stroke="none" fontFamily="Open Sans, sans-serif" textLength="14" lengthAdjust="spacingAndGlyphs">R</text></>,
  <><text x="0" y="20" fontSize="24" fontWeight="600" fill="#3a96dd" stroke="none" fontFamily="Open Sans, sans-serif" textLength="27" lengthAdjust="spacingAndGlyphs">Py</text></>,
  <>{ax}<path d="M2 13h12M2 19h7" stroke={G} /><path d="M2 6h18" stroke={LB} /><circle cx="22" cy="6" r="3.200" {...b} /><circle cx="16.500" cy="13" r="2" /><circle cx="10.500" cy="19" r="2" /></>,
  <><path d="M10 14h7M14 4v20M14 4h4M14 24h4" /><path d="M0 11h10v6H0zM17 1h10v6H17zM17 11h10v6H17zM17 20h10v6H17z" {...b} /></>,
  <><path d="M1 3h26v17H13l-6 7v-7H1z" stroke={LB} /></>,
  <><path d="M3 8V1h13l7 7v19H3V14M16 1v7h7" /><circle cx="4" cy="11" r="2.500" {...b} /><path d="M12 14h8M8 18h8" stroke="#3a96dd" strokeWidth="2" /></>,
  <><path d="M7 3H1q0 9 8 10M21 3h6q0 9-8 10M7 3v7q0 7 7 9 7-2 7-9V3M12 19v4M16 19v4" /><path d="M7 1h14v3H7zM7 23h14v4H7z" {...b} /></>,
  <><path d="M3 0h14l7 8v19H3zM17 0v8h7" strokeWidth="2" /><path d="M7 16h3v9H7zM12 20h3v5h-3zM17 13h4v12h-4z" fill="#eee" stroke="none" /></>,
  <><path d="M14 4h13v20H2V16M6 21h19" /><text x="7" y="18" fontSize="12" fill="#3a96dd" stroke="none" fontFamily="Open Sans, sans-serif" textLength="18">123</text><path d="M5 0h9L9 7h6L3 17l2-8H0z" fill="#ffc47a" stroke="#e8730c" /></>,
  <><path d="M15 2h11v11M15 2v10M2 16h11v10H2z" stroke={G} /><path d="M7 9h6v6H7z" fill={B} stroke="none" /><path d="M15 15h13v2l-4 5v7h-4v-7l-5-5z" /><path d="M5 0h9L9 7h6L3 17l2-8H0z" fill="#ffc47a" stroke="#e8730c" /></>,
  <><path d="M10 1h17v15M2 16v10h18" stroke={LB} /><path d="M24 3q-1 5-5 6-5 1-5 6t-7 6l-4 4h11q6-9 10-9z" fill={B} stroke={LB} strokeWidth="1" /><path d="M4 15Q-1 8-1 4 0 0 4 0t5 4q0 5-5 11z" fill="#e8730c" stroke="none" /><circle cx="4" cy="5" r="1.500" fill="#222" stroke="none" /><circle cx="24" cy="23" r="4.300" fill="#e8730c" stroke="none" /><circle cx="27" cy="15.500" r="2.300" fill="#e8730c" stroke="none" /></>,
  <g stroke="#9a35a5" strokeWidth="1.500"><path d="M1 14L10 3q3-3 6 0l10 11-9 11q-3 3-6 0zM10 3l8 10-8 11M16 14l-6-6M10 14l6-7M16 25l-6-7 8-9M26 14h-8" /></g>,
  <g stroke="#1a7fe0" strokeWidth="1.700"><path d="M2 3h16l9 11-9 11H2l9-11zM2 25L20 5M9 25L24 9M2 3l9 11" /></g>,
];
function Field({ on, label }) {
  return (
    <div className="mt-[16px] flex h-[24px] items-center justify-between pr-[33px]">
      <span>{label}</span>
      <div className={`flex h-[24px] w-[48px] items-center rounded-full border text-[13.500px] ${on ? "justify-end border-[#2aac94] bg-[#2aac94] pr-[6px] text-[#252525]" : "border-[#adadad] pl-[6px] text-[#adadad]"}`}>
        {on ? <>On<div className="ml-[4px] h-3 w-3 rounded-full bg-[#252525]" /></> : <><div className="mr-1 h-3 w-3 rounded-full bg-[#adadad]" />Off</>}
      </div>
    </div>
  );
}
function VizPane() {
  return (
    <div className="flex w-[272px] shrink-0 flex-col border-x border-[#666] text-[17px] text-white">
      <div className="flex items-center justify-between pl-[12px] pr-[15px] pt-[13px] text-[22.500px] font-semibold leading-[32px]">Visualizations<Dbl /></div>
      <div className="mt-[11px] pl-[12px] font-semibold leading-6 tracking-[-0.200px]">Build visual</div>
      <div className="mt-[6px] flex pl-[12px]">
        <div className="flex h-12 w-12 items-center justify-center rounded bg-[#2c2c2c]"><S className="h-9 w-9" vb="0 0 36 36"><path d="M0 1h29" /><path d="M1 8h34v10H1zM1 24h34v10H1z" fill="#2aac94" strokeDasharray="3 2" /></S></div>
        <S className="ml-[57px] mt-[6px] h-9 w-9" vb="0 0 36 36" c="#b8b8b8"><path d="M5 35H1V1h15l9 9v4" /><path d="M16 1v10h10z" fill="#fff" /><path d="M9 34q5-1 6-6 4-3 8 0 0 7-14 7zM19 25L34 13q3 0 1 3L24 29" fill="#141414" /></S>
      </div>
      <svg className="mt-[6px] block h-[14px] w-[270px]" viewBox="0 0 270 14" fill="none" stroke="#707070" strokeWidth="1.500"><path d="M0 12.500h24l12-11.500 12 11.500h222" /></svg>
      <div className="ml-[16px] mt-[16px] grid w-[238px] grid-cols-6 gap-[14px]">{vis.map((v, i) => <V key={i}>{v}</V>)}</div>
      <div className="ml-[21px] mt-[24px] flex gap-[3px]">{[0, 1, 2].map((i) => <div key={i} className="h-[3px] w-[3px] rounded-full bg-white" />)}</div>
      <div className="mt-[28px] h-px shrink-0 bg-[#ccc]" />
      <div className="pl-[18px] pt-[13px] leading-6">Values</div>
      <div className="ml-[6px] mt-[8px] flex h-[42px] w-[255px] items-center rounded-sm border border-dashed border-[#777] pb-[3px] pl-[15px]">Add data fields here</div>
      <div className="pl-[18px] pt-[16px] font-semibold leading-6">Drill through</div>
      <div className="-mt-[3px] pl-[18px]"><Field label="Cross-report" /><Field on label="Keep all filters" /></div>
      <div className="ml-[6px] mt-[15px] flex h-[38px] w-[255px] items-center whitespace-nowrap rounded-sm border border-dashed border-[#777] bg-black pl-[12px] text-[17.150px]">Add drill-through fields here</div>
    </div>
  );
}
const rows = [["CommuteDist..."], ["CustomerName"], ["DueDate", "d"], ["EmailAddress"], ["Gender"], ["MaritalStatus"], ["OrderDate", "d"], ["ProductCateg..."], ["ProductName"], ["ProductSubca..."], ["PromotionType"], ["ReorderPoint", "d"], ["SalesTerritory..."], ["SalesTerritory..."], ["SalesTerritory..."], ["ShipDate", "d"], ["StandardCost", "s"], ["YearlyIncome", "s"]];
const Chev = () => <S className="h-[14px] w-[9px]" vb="0 0 9 14" c="#eee" w={1.8}><path d="M1.500 1.500L7.500 7l-6 5.500" /></S>;
function DataPane() {
  return (
    <div className="flex w-[270px] shrink-0 flex-col text-white">
      <div className="flex items-center justify-between pl-[12px] pr-[15px] pt-[13px] text-[22px] font-semibold leading-[32px]">Data<Dbl /></div>
      <div className="ml-[6px] mt-[23px] flex h-[36px] w-[258px] items-center rounded-md border border-[#666] border-b-[#adadad] bg-[#242424] pl-[18px] text-[19px] text-[#999]">
        <S className="h-[22px] w-[22px]" vb="0 0 22 22" c="#adadad" w={1.7}><circle cx="9" cy="9" r="8" /><path d="M15 15l6.500 6.500" /></S><span className="ml-[10px] pt-[2px]">Search</span>
      </div>
      <div className="mt-[12px] flex h-[672px]">
        <div className="flex w-[252px] flex-col overflow-hidden text-[16.800px]">
          <div className="-mt-[12px]">
            {rows.map(([t, k], i) => (
              <div key={i} className="flex h-[36px] items-center">
                <div className="ml-[47px] w-[19px]">{k === "d" && <Chev />}</div>
                <div className="h-[18px] w-[18px] rounded-[3px] border border-[#b0b0b0]" />
                <div className="ml-[12px] w-[27px]">
                  {k === "d" && <S className="h-[18px] w-[18px]" vb="0 0 18 18" c="#eee" w={1.500}><rect x="1" y="1" width="16" height="16" rx="3" /><path d="M1 5h16" /><path d="M5 9.500h9M5 13h6" strokeWidth="2" strokeDasharray="2 1.500" /></S>}
                  {k === "s" && <S className="h-[18px] w-[18px]" vb="0 0 18 18" c="#eee" w={1.600}><path d="M16 1H2l8 8-8 8h15" /></S>}
                </div>
                <div className="whitespace-nowrap pt-px leading-6">{t}</div>
              </div>
            ))}
            <div className="flex h-[36px] items-center">
              <div className="ml-[25px] w-[19px]"><Chev /></div>
              <S className="h-[18px] w-[18px]" vb="0 0 18 18" c="#eee" w={1.500}><path d="M1 17V3q0-2 2-2h12q2 0 2 2v14M1 6h16M1 12h16M6 1v16M12 1v16" /></S>
              <div className="ml-[9px] pt-px leading-6">Sales</div>
            </div>
          </div>
        </div>
        <div className="mt-[74px] h-[576px] w-[12px] bg-[#898886]" />
      </div>
    </div>
  );
}
function PageTabs() {
  return (
    <div className="flex h-[53px] items-start bg-[#292929]">
      <div className="ml-[15px] flex w-[36px] flex-col items-center"><S className="mt-[9px] h-[26px] w-[26px]" vb="0 0 26 26" c="#fff"><rect x="2" y="2" width="22" height="16" rx="3" /><path d="M9 18v5M17 18v5M6 23.500h14" /></S><div className="mt-[6px] h-[5px] w-[36px] rounded-full bg-[#2aac94]" /></div>
      <S className="ml-[39px] mt-[7px] h-[30px] w-[18px]" vb="0 0 18 30" c="#fff"><rect x="2" y="2" width="14" height="26" rx="3" /><path d="M6.500 23.500h5" /></S>
      <S className="ml-[32px] mt-[19px] h-[14px] w-[9px]" vb="0 0 9 14" w={1.2}><path d="M8 1.500v11L1.500 7z" /></S>
      <S className="ml-[23px] mt-[19px] h-[14px] w-[9px]" vb="0 0 9 14" c="#d8a8e0" w={1.2}><path d="M1.500 1.500v11L8 7z" /></S>
      <div className="ml-[10px] flex h-[53px] w-[276px] items-center justify-center border-b-[6px] border-l border-b-[#2aac94] border-l-[#666] pt-[8px] text-[17.200px] font-semibold text-white">Adventures Online Sales-2</div>
      <div className="flex h-[53px] w-[59px] items-center justify-center bg-[#2aac94] pb-[3px]"><S className="h-4 w-4" vb="0 0 16 16" c="#1b1b1b" w={4}><path d="M8 0v16M0 8h16" /></S></div>
    </div>
  );
}
function StatusBar() {
  return (
    <div className="flex h-[36px] flex-col border-t border-[#666] text-[17.100px] text-[#dedede]">
      <div className="flex h-[33px] items-center">
        <div className="ml-[6px] w-[1308px] text-[17.500px]"><span className="inline-block pt-[3px]">Page 1 of 1</span></div>
        <div className="h-[2px] w-[8px] bg-[#dedede]" />
        <S className="ml-[6px] h-[20px] w-[150px]" vb="0 0 150 20" w={1.300}><path d="M0 10h150M75 6.500v8" /><path d="M44 1h6v18h-6z" fill="#dedede" stroke="none" /></S>
        <S className="ml-[8px] h-[12px] w-[12px]" vb="0 0 12 12"><path d="M6 0v12M0 6h12" /></S>
        <span className="ml-[20px] w-[64px] tracking-[-0.100px]">66%</span>
        <S className="h-[18px] w-[22px]" vb="0 0 22 18" w={1.800}><rect x="1" y="1" width="20" height="16" rx="2" /><path d="M8 5H5v8h3M14 5h3v8h-3" strokeDasharray="3 2" /></S>
        <span className="ml-[22px] whitespace-nowrap pt-[3px]">Update available (click to download)</span>
      </div>
      <div className="flex h-[2px] bg-[#262323]"><div className="ml-[72px] w-[432px] bg-[#5d5b5b]" /><div className="ml-[452px] w-[66px] bg-[#4c4a4a]" /></div>
    </div>
  );
}

export default function App() {
  return (
    <div className="flex h-[1080px] w-[1920px] flex-col overflow-hidden bg-[#141414] font-['Open_Sans',sans-serif]">
      <TitleBar />
      <Menu />
      <Ribbon />
      <div className="flex h-[789px]">
        <LeftNav />
        <div className="flex w-[1317px] flex-col">
          <div className="flex h-[736px] bg-white">
            <div className="flex w-[1268px] flex-col overflow-hidden">
              <div className="flex h-[360px] shrink-0 items-start pl-[11px]"><TerritoryChart /><div className="w-[70px]" /><MapVisual /></div>
              <div className="flex h-[353px] shrink-0 items-end overflow-hidden pl-[11px]"><ProductChart /><div className="w-[30px]" /><PieChart /></div>
              <div className="ml-[2px] h-[3px] w-[1265px] shrink-0 bg-[repeating-linear-gradient(90deg,#555_0_3px,transparent_3px_6px)]" />
            </div>
            <div className="flex w-[49px] flex-col items-center border-l border-[#b0b0b0] pt-[23px]">
              <Dbl c="#252423" flip />
              <S className="ml-[7px] mt-[29px] h-[14px] w-[12px]" vb="0 0 12 14" c="#252423" w={1.800}><path d="M11 0v14M6.500 3v8M2 5.500v3" /></S>
              <div className="ml-[-3px] mt-[13px] text-[22px] font-semibold leading-[26px] text-[#252423] [writing-mode:vertical-rl]">Filters</div>
            </div>
          </div>
          <PageTabs />
        </div>
        <VizPane />
        <DataPane />
      </div>
      <StatusBar />
    </div>
  );
}
